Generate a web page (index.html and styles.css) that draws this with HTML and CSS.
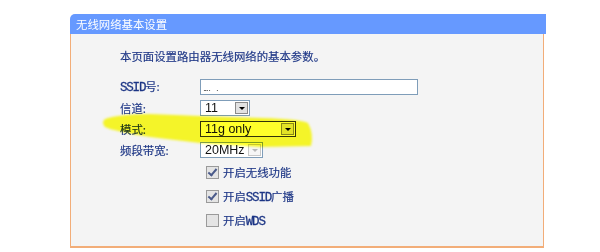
FILE: index.html
```html
<!DOCTYPE html>
<html lang="zh-CN">
<head>
    <meta charset="UTF-8">
    <title>无线网络基本设置</title>
    <link rel="stylesheet" href="styles.css">
</head>
<body>
    <div class="panel">
        <div class="panelTitle">无线网络基本设置</div>
        <div class="panelBody">
            <p class="intro">本页面设置路由器无线网络的基本参数。</p>

            <div class="row">
                <span class="label"><span class="mono">SSID</span>号:</span>
                <div class="textBox"><span class="ssidText">ـ.. &nbsp; .</span></div>
            </div>
            <div class="row">
                <span class="label">信道:</span>
                <div class="selectBox channel">
                    <span class="value">11</span>
                    <span class="arrow"></span>
                </div>
            </div>
            <div class="row">
                <span class="label">模式:</span>
                <div class="selectBox mode">
                    <span class="value">11g only</span>
                    <span class="arrow"></span>
                </div>
            </div>
            <div class="row">
                <span class="label">频段带宽:</span>
                <div class="selectBox width disabled">
                    <span class="value">20MHz</span>
                    <span class="arrow"></span>
                </div>
            </div>

            <!-- 复选框 -->
            <div class="checkRow">
                <span class="checkBox checked"></span>
                <span class="checkText">开启无线功能</span>
            </div>
            <div class="checkRow">
                <span class="checkBox checked"></span>
                <span class="checkText">开启<span class="mono">SSID</span>广播</span>
            </div>
            <div class="checkRow">
                <span class="checkBox"></span>
                <span class="checkText">开启<span class="mono">WDS</span></span>
            </div>
        </div>
    </div>

    <!-- 荧光笔标记 -->
    <svg class="marker" width="600" height="252" viewBox="0 0 600 252">
        <defs>
            <filter id="soft"><feGaussianBlur stdDeviation="1.2"/></filter>
        </defs>
        <path d="M105 119 Q120 114 150 114 L200 116 L262 118 Q300 119 308 123 Q314 134 311 146 L262 147 L200 143 L150 137 Q113 131 105 127 Q101 122 105 119 Z" fill="#ffff2a" filter="url(#soft)"/>
    </svg>
</body>
</html>
```

FILE: styles.css
```css
body {
    margin: 0;
    background-color: #ffffff;
    font-family: "Noto Sans CJK SC", "DejaVu Sans", sans-serif;
    font-size: 11.4px;
    color: #1c3585;
    -webkit-text-stroke: 0.15px #1c3585;
    position: relative;
    height: 252px;
    overflow: hidden;
}

.panel {
    margin: 14px 0 0 70px;
    width: 476px;
}

.panelTitle {
    height: 20px;
    line-height: 20px;
    padding-left: 6px;
    background-color: #6699ff;
    color: #ffffff;
    -webkit-text-stroke: 0;
    border-top-left-radius: 5px;
}

.panelBody {
    height: 212px;
    background-color: #f4f4f4;
    border-left: 1px solid #f2ad78;
    border-right: 1px solid #f2ad78;
    border-bottom: 2px solid #f2ad78;
    margin-right: 2px;
    padding-left: 49px;
}

.intro {
    margin: 0;
    padding-top: 14px;
    height: 28px;
    line-height: 16px;
}

.row {
    display: flex;
    align-items: center;
    height: 21px;
}

.label {
    width: 80px;
}

.mono {
    font-family: "Liberation Mono", monospace;
    font-size: 12.5px;
    letter-spacing: -1.2px;
    -webkit-text-stroke: 0.3px #1c3585;
}

.textBox {
    width: 213px;
    height: 14px;
    border: 1px solid #7f9db9;
    background-color: #ffffff;
    line-height: 12px;
    padding-left: 3px;
}

.ssidText {
    font-size: 8px;
    color: #333333;
    -webkit-text-stroke: 0;
}

.selectBox {
    display: flex;
    align-items: center;
    height: 14px;
    border: 1px solid #7f9db9;
    background-color: #ffffff;
    font-family: "Liberation Sans", Arial, sans-serif;
    font-size: 12.5px;
    color: #111111;
    -webkit-text-stroke: 0;
}

.selectBox .value {
    flex: 1;
    padding-left: 4px;
    line-height: 14px;
}

.selectBox .arrow {
    position: relative;
    width: 13px;
    height: 12px;
    margin-right: 1px;
    border: 1px solid #8a8a8a;
    background-color: #e2e2e2;
    box-sizing: border-box;
}

.selectBox .arrow::after {
    content: "";
    position: absolute;
    left: 3px;
    top: 4px;
    border-left: 3px solid transparent;
    border-right: 3px solid transparent;
    border-top: 3px solid #000000;
}

.channel {
    width: 48px;
}

.mode {
    width: 94px;
    border-color: #333333;
}

.width {
    width: 61px;
}

.disabled .arrow {
    border-color: #c8c8c8;
    background-color: #f6f6f6;
}

.disabled .arrow::after {
    border-top-color: #b8b8b8;
}

.checkRow {
    display: flex;
    align-items: center;
    height: 24px;
    padding-left: 86px;
}

.checkBox {
    position: relative;
    width: 11px;
    height: 11px;
    border: 1px solid #9a9a9a;
    background-color: #e4e4e4;
    margin-right: 4px;
}

.checkBox.checked::after {
    content: "";
    position: absolute;
    left: 3px;
    top: 0px;
    width: 3px;
    height: 7px;
    border-right: 2px solid #4a5a8a;
    border-bottom: 2px solid #4a5a8a;
    transform: rotate(40deg);
}

.marker {
    position: absolute;
    left: 0;
    top: 0;
    pointer-events: none;
    mix-blend-mode: multiply;
}
```
